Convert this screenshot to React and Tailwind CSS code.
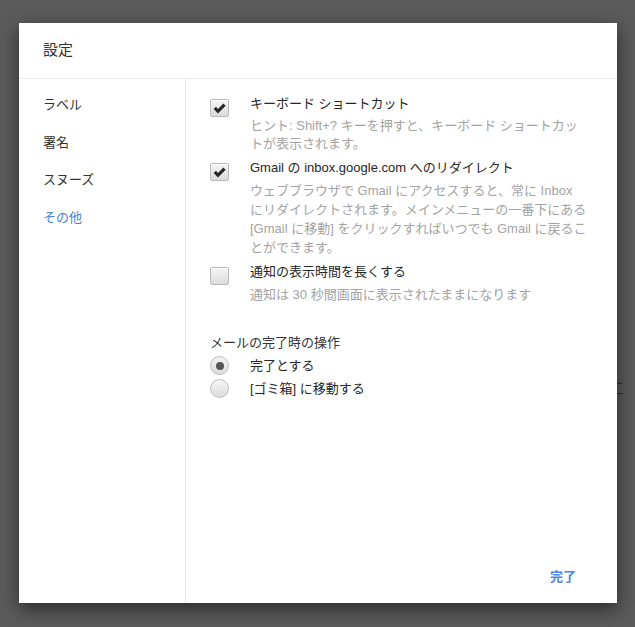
import React from "react";

const FONT = { fontFamily: '"Liberation Sans", "Noto Sans CJK JP", sans-serif' };

function Checkbox({ checked }) {
  return (
    <div className="mt-[5px] h-[18px] w-[19px] shrink-0 rounded-[2px] border border-[#b9b9b9] bg-gradient-to-b from-[#f4f4f4] to-[#dcdcdc] shadow-[inset_0_1px_0_#fff] flex items-center justify-center">
      {checked && (
        <svg width="13" height="11" viewBox="0 0 13 11">
          <path d="M0.6 6 L3 3.8 L5 6 L10.4 0.6 L12.6 2.8 L5 10.4 Z" fill="#262626" />
        </svg>
      )}
    </div>
  );
}

function Radio({ checked }) {
  return (
    <div className="h-[19px] w-[19px] shrink-0 rounded-full border border-[#bdbdbd] bg-gradient-to-b from-[#f5f5f5] to-[#dcdcdc] flex items-center justify-center">
      {checked && <div className="h-[8px] w-[8px] rounded-full bg-[#555]" />}
    </div>
  );
}

function Item({ checked, label, children, tight }) {
  return (
    <div className="flex gap-[21px]">
      <Checkbox checked={checked} />
      <div className="flex flex-col">
        <div className="text-[13px] leading-[19px] text-[#262626] whitespace-nowrap">{label}</div>
        <div className={tight ? "mt-[4px] text-[13px] leading-[18px] text-[#a3a3a3] whitespace-nowrap" : "mt-[4px] text-[13px] leading-[19px] text-[#a3a3a3] whitespace-nowrap"}>{children}</div>
      </div>
    </div>
  );
}

export default function App() {
  return (
    <div className="relative h-[627px] w-[635px] overflow-hidden bg-[#5b5b5b]" style={FONT}>
      <div className="absolute left-[606px] top-[377px] text-[17px] leading-[20px] text-[#2e2e2e] underline">ナ</div>
      <div className="relative ml-[19px] mt-[23px] flex h-[580px] w-[598px] flex-col bg-white shadow-[0_6px_18px_rgba(0,0,0,0.55)]">
        <div className="flex h-[56px] shrink-0 items-center border-b border-[#ebebeb] px-[24px] text-[15px] text-[#333]">
          設定
        </div>
        <div className="flex flex-1">
          <div className="flex w-[167px] shrink-0 flex-col gap-[18.5px] border-r border-[#e6e6e6] px-[24px] pt-[16px] text-[13px] leading-[19px] text-[#333]">
            <div>ラベル</div>
            <div>署名</div>
            <div>スヌーズ</div>
            <div className="text-[#4a80d6]">その他</div>
          </div>
          <div className="flex flex-1 flex-col">
            <div className="flex flex-col pl-[24px] pt-[15px]">
              <div className="flex flex-col gap-[5px]">
                <Item checked tight label="キーボード ショートカット">
                  ヒント: Shift+? キーを押すと、キーボード ショートカッ
                  <br />
                  トが表示されます。
                </Item>
                <Item checked label="Gmail の inbox.google.com へのリダイレクト">
                  ウェブブラウザで Gmail にアクセスすると、常に Inbox
                  <br />
                  にリダイレクトされます。メインメニューの一番下にある
                  <br />
                  [Gmail に移動] をクリックすればいつでも Gmail に戻るこ
                  <br />
                  とができます。
                </Item>
                <Item label="通知の表示時間を長くする">通知は 30 秒間画面に表示されたままになります</Item>
              </div>
              <div className="mt-[29px] text-[13px] leading-[19px] text-[#333]">メールの完了時の操作</div>
              <div className="mt-[4px] flex flex-col gap-[4px]">
                <div className="flex items-center gap-[21px]">
                  <Radio checked />
                  <span className="text-[13px] leading-[19px] text-[#262626]">完了とする</span>
                </div>
                <div className="flex items-center gap-[21px]">
                  <Radio />
                  <span className="text-[13px] leading-[19px] text-[#262626]">[ゴミ箱] に移動する</span>
                </div>
              </div>
            </div>
            <div className="mt-auto flex justify-end pb-[15px] pr-[25px]">
              <button className="px-[16px] py-[2px] text-[13px] leading-[19px] font-bold text-[#4a86e0]">完了</button>
            </div>
          </div>
        </div>
      </div>
    </div>
  );
}
